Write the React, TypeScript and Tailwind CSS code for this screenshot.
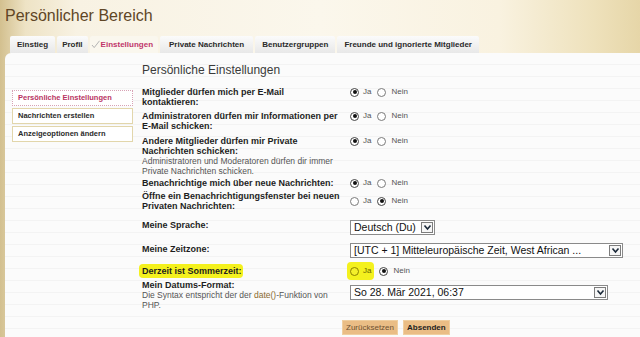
import React from "react";

// Radio buttons drawn as spans so they look like the old browser widgets
function Radio({ checked, marked }: { checked: boolean; marked?: boolean }) {
  const ring = marked
    ? "border-[#8c8200] bg-[#f4ef2a]"
    : checked
    ? "border-[#444] bg-white"
    : "border-[#7a7a7a] bg-white";
  return (
    <span className={`flex h-[9px] w-[9px] items-center justify-center rounded-full border ${ring}`}>
      {checked && <span className="h-[4px] w-[4px] rounded-full bg-[#111]" />}
    </span>
  );
}

function YesNo({ yes, marked }: { yes: boolean; marked?: boolean }) {
  return (
    <div className="flex h-[10px] items-center text-[8px] text-[#555]">
      {marked ? (
        <span className="-ml-[3px] flex items-center rounded-[4px] bg-[#f4f11e] py-[3px] pl-[3px] pr-[3px]">
          <Radio checked={yes} marked />
          <span className="ml-[4px] text-[#6a6400]">Ja</span>
        </span>
      ) : (
        <>
          <Radio checked={yes} />
          <span className="ml-[4px]">Ja</span>
        </>
      )}
      <span className={marked ? "ml-[5px]" : "ml-[6px]"}>
        <Radio checked={!yes} />
      </span>
      <span className="ml-[5px]">Nein</span>
    </div>
  );
}

function Chevron() {
  return (
    <span className="flex h-[11px] w-[12px] items-center justify-center border border-[#7d7d7d] bg-[#f6f6f6]">
      <svg width="9" height="7" viewBox="0 0 9 7">
        <path d="M1.5 1.5 L4.5 5 L7.5 1.5" fill="none" stroke="#1c2a3a" strokeWidth="1.6" />
      </svg>
    </span>
  );
}

function Select({ value, width, className = "" }: { value: string; width: string; className?: string }) {
  return (
    <div
      className={`flex h-[15px] items-center justify-between border border-[#8a8a8a] bg-white pl-[3px] pr-[1px] text-[10.5px] leading-none text-[#111] ${width} ${className}`}
    >
      <span className="whitespace-nowrap">{value}</span>
      <Chevron />
    </div>
  );
}

function Row({
  label,
  desc,
  children,
  className = "",
  labelClass = "",
  inputClass = "",
}: {
  label: React.ReactNode;
  desc?: React.ReactNode;
  children: React.ReactNode;
  className?: string;
  labelClass?: string;
  inputClass?: string;
}) {
  return (
    <div className={`flex items-start ${className}`}>
      <div className={`w-[208px] shrink-0 whitespace-nowrap ${labelClass}`}>
        <div className="text-[9px] font-bold leading-[10px] text-[#1e1e1e]">{label}</div>
        {desc && <div className="text-[8.5px] leading-[10px] text-[#555]">{desc}</div>}
      </div>
      <div className={`flex ${inputClass}`}>{children}</div>
    </div>
  );
}

const tabs = [
  { name: "Einstieg", cls: "px-[7px]" },
  { name: "Profil", cls: "px-[5px]" },
  { name: "Einstellungen", cls: "pl-[1px] pr-[5px]", active: true },
  { name: "Private Nachrichten", cls: "px-[9px]" },
  { name: "Benutzergruppen", cls: "px-[7px]" },
  { name: "Freunde und ignorierte Mitglieder", cls: "px-[7px]" },
];

const menu = [
  { name: "Persönliche Einstellungen", active: true },
  { name: "Nachrichten erstellen" },
  { name: "Anzeigeoptionen ändern" },
];

export default function App() {
  return (
    <div className="flex h-[337px] w-[640px] flex-col overflow-hidden bg-[linear-gradient(90deg,#d3c08f_0%,#eee3c5_4%,#f8f2e3_12%,#fbf7ec_50%,#f9f2e0_78%,#eee1bb_93%,#e6d6a8_100%)] font-['Liberation_Sans',Arial,sans-serif]">
      <h1 className="pl-[5px] pt-[6px] text-[16px] leading-[20px] text-[#5f4626]">Persönlicher Bereich</h1>

      <nav className="ml-[10px] mt-[10px] flex h-[17px] gap-[2px]">
        {tabs.map((t) => (
          <div
            key={t.name}
            className={`flex h-full items-center whitespace-nowrap rounded-t-[2px] text-[8px] font-bold ${t.cls} ${
              t.active
                ? "bg-[#faf7ee] text-[#c0356a]"
                : "bg-[linear-gradient(180deg,#fbfbfb,#e8e8e8)] text-[#2a2a2a]"
            }`}
          >
            {t.active && (
              <svg width="9" height="9" viewBox="0 0 9 9" className="mr-[1px]">
                <path d="M1 5 L3.2 7.6 L8.5 0.8" fill="none" stroke="#b4b4b4" strokeWidth="1" />
              </svg>
            )}
            {t.name}
          </div>
        ))}
      </nav>

      <div className="ml-[5px] flex flex-1 rounded-tl-[6px] bg-[repeating-linear-gradient(180deg,#fbfbfb_0px,#fbfbfb_11px,#f3f3f3_11px,#f3f3f3_12px)]">
        <aside className="ml-[7px] flex w-[121px] shrink-0 flex-col gap-[2px] pt-[37px]">
          {menu.map((m) => (
            <div
              key={m.name}
              className={`flex h-[16px] items-center whitespace-nowrap border bg-white pl-[5px] text-[7.5px] font-bold ${
                m.active ? "border-dotted border-[#d8a2b5] text-[#b83262]" : "border-[#e2d6ab] text-[#2a2a2a]"
              }`}
            >
              {m.name}
            </div>
          ))}
        </aside>

        <main className="ml-[9px] flex-1 pt-[10px]">
          <h2 className="text-[12px] leading-[14px] text-[#3a3a3a]">Persönliche Einstellungen</h2>

          <Row className="mt-[10px]" label={<>Mitglieder dürfen mich per E-Mail<br />kontaktieren:</>}>
            <YesNo yes />
          </Row>
          <Row className="mt-[4px]" label={<>Administratoren dürfen mir Informationen per<br />E-Mail schicken:</>}>
            <YesNo yes />
          </Row>
          <Row
            className="mt-[5px]"
            label={<>Andere Mitglieder dürfen mir Private<br />Nachrichten schicken:</>}
            desc={<>Administratoren und Moderatoren dürfen dir immer<br />Private Nachrichten schicken.</>}
          >
            <YesNo yes />
          </Row>
          <Row className="mt-[2px]" label="Benachrichtige mich über neue Nachrichten:">
            <YesNo yes />
          </Row>
          <Row
            className="mt-[3px]"
            inputClass="mt-[5px]"
            label={<>Öffne ein Benachrichtigungsfenster bei neuen<br />Privaten Nachrichten:</>}
          >
            <YesNo yes={false} />
          </Row>
          <Row className="mt-[9px]" label="Meine Sprache:">
            <Select value="Deutsch (Du)" width="w-[85px]" />
          </Row>
          <Row className="mt-[8px]" labelClass="mt-[1px]" label="Meine Zeitzone:">
            <Select value="[UTC + 1] Mitteleuropäische Zeit, West African ..." width="w-[273px]" />
          </Row>
          <Row
            className="mt-[8px]"
            label={
              <span className="-ml-[3px] rounded-[4px] bg-[#f4f11e] py-[2px] pl-[3px] pr-[1px]">Derzeit ist Sommerzeit:</span>
            }
          >
            <YesNo yes={false} marked />
          </Row>
          <Row
            className="mt-[4px]"
            inputClass="mt-[5px]"
            label="Mein Datums-Format:"
            desc={
              <>
                Die Syntax entspricht der der <span className="text-[#8a6a2e]">date()</span>-Funktion von
                <br />
                PHP.
              </>
            }
          >
            <Select value="So 28. Mär 2021, 06:37" width="w-[258px]" className="h-[14px]" />
          </Row>

          <div className="ml-[200px] mt-[10px] flex gap-[5px]">
            <button className="h-[15px] border border-[#f0cfa0] bg-[#eabd85] px-[3px] text-[8px] text-[#6e5232]">
              Zurücksetzen
            </button>
            <button className="h-[15px] border border-[#f0cfa0] bg-[#eabd85] px-[3px] text-[8px] font-bold text-[#1e1e1e]">
              Absenden
            </button>
          </div>
        </main>
      </div>
    </div>
  );
}
